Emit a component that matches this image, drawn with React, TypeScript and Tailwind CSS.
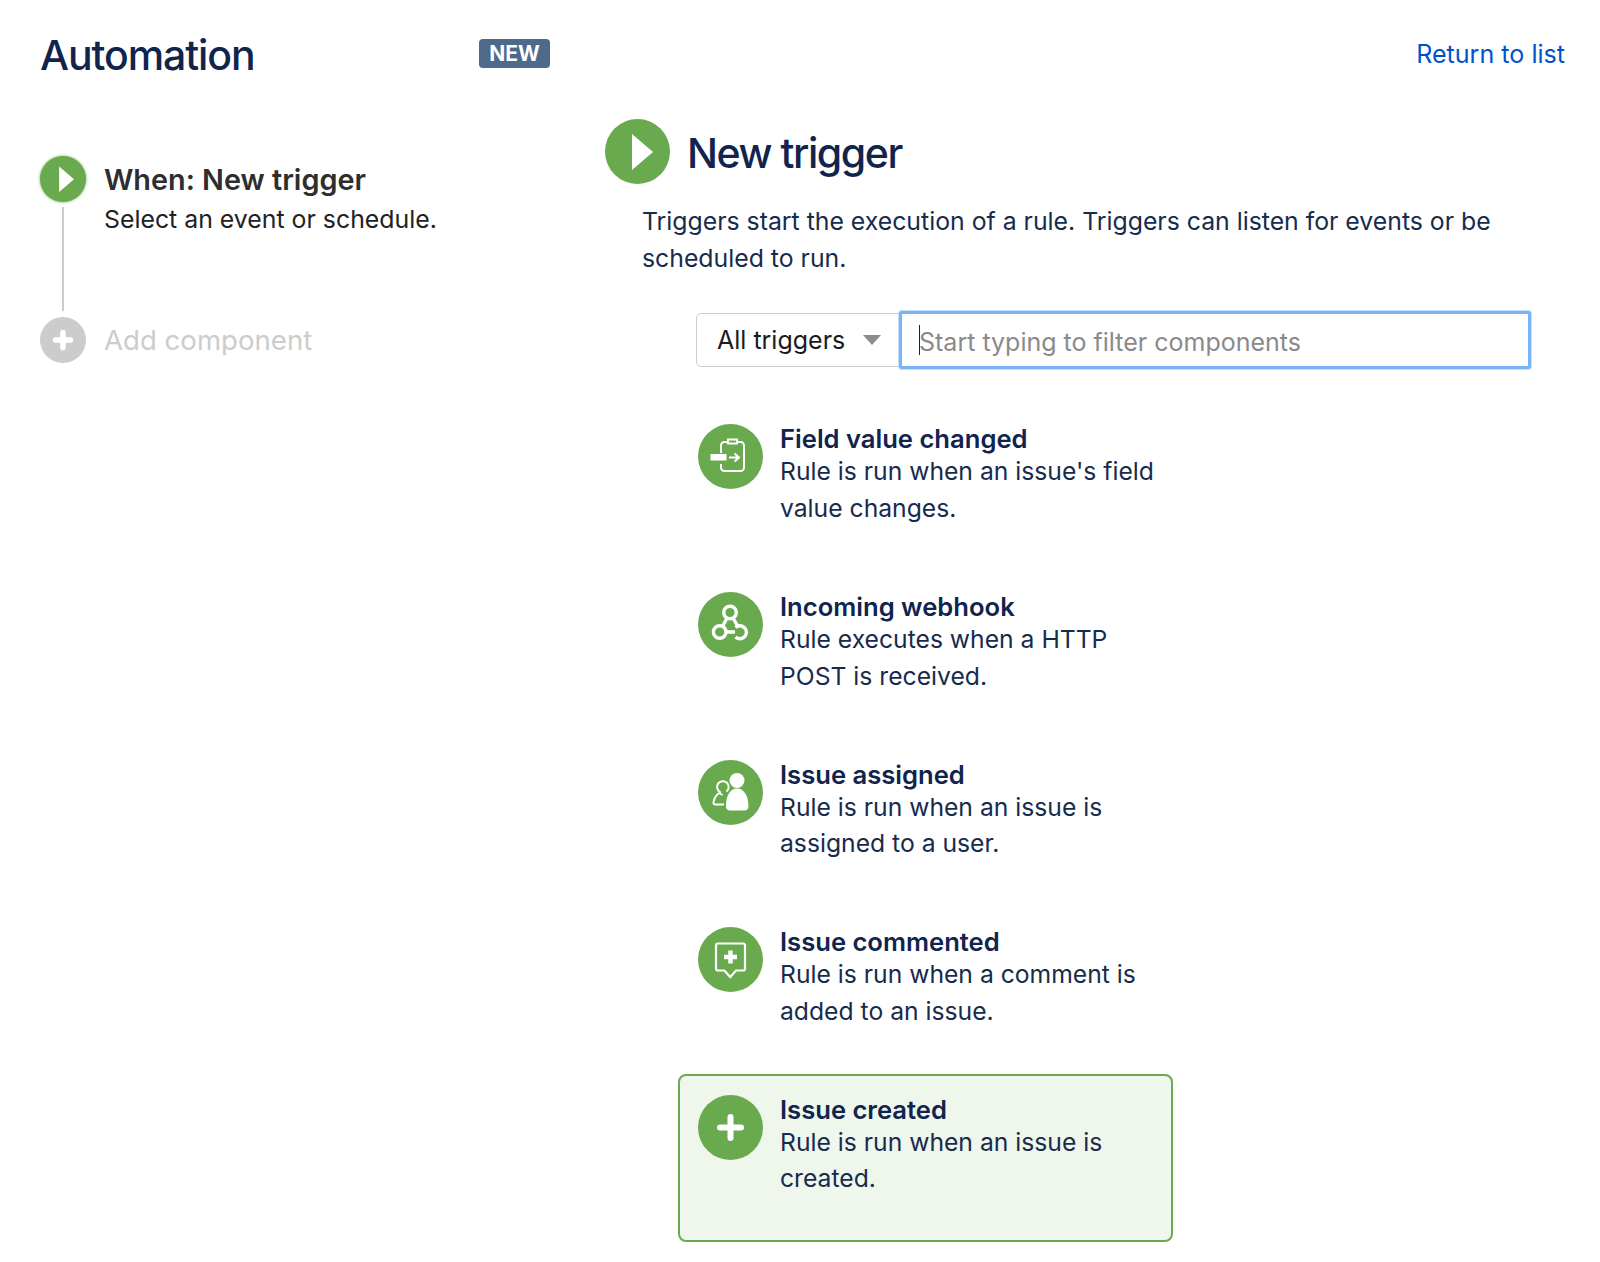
const PlayIcon = () => (
  <svg viewBox="0 0 65 65" className="w-full h-full" fill="none">
    <path d="M27 15V51L48 33Z" fill="white" />
  </svg>
);

const FieldIcon = () => (
  <svg viewBox="0 0 65 65" className="w-full h-full" fill="none">
    <path
      d="M30 18H26.5a3.5 3.5 0 0 0-3.5 3.5V29M23 40v3.5a3.5 3.5 0 0 0 3.5 3.5h16a3.5 3.5 0 0 0 3.5-3.5v-22a3.5 3.5 0 0 0-3.5-3.5H39"
      stroke="white"
      strokeWidth="2"
    />
    <path d="M30 19.5V15.5h9v4z" stroke="white" strokeWidth="2" />
    <rect x="12.5" y="30" width="16" height="6.5" fill="white" />
    <path d="M31 33.5h9M36.5 29.5l4.5 4-4.5 4" stroke="white" strokeWidth="2" />
  </svg>
);

const WebhookIcon = () => (
  <svg viewBox="0 0 65 65" className="w-full h-full" fill="none" stroke="white" strokeWidth="3.400">
    <circle cx="32" cy="20.500" r="6.300" />
    <circle cx="21.700" cy="40" r="6.300" />
    <path d="M37.500 35.500A6.500 6.500 0 1 1 37.500 45" />
    <path d="M29 26L24.500 34.500M35 26L40 34.500M28 40H37" />
  </svg>
);

const AssignedIcon = () => (
  <svg viewBox="0 0 65 65" className="w-full h-full" fill="none">
    <circle cx="39" cy="20.500" r="7.500" fill="white" />
    <path
      d="M39 28.500c7 0 11.500 7.500 11.500 17.500a4 4 0 0 1-4 4.500H32a4 4 0 0 1-4-4.500C28 36 32 28.500 39 28.500Z"
      fill="white"
    />
    <path
      d="M26 44.500H17.500a2 2 0 0 1-2-2.500c.8-4 3.500-7.500 5.500-9M28.500 31.500A5.800 5.800 0 1 0 22 32v1.500l2.500 1.500"
      stroke="white"
      strokeWidth="2"
    />
  </svg>
);

const CommentIcon = () => (
  <svg viewBox="0 0 65 65" className="w-full h-full" fill="none">
    <path
      d="M20 16.500h25a2 2 0 0 1 2 2v23a2 2 0 0 1-2 2h-7l-5.800 6.500-5.800-6.500H20a2 2 0 0 1-2-2v-23a2 2 0 0 1 2-2Z"
      stroke="white"
      strokeWidth="2.200"
    />
    <path d="M32.500 23.500v13M26 30h13" stroke="white" strokeWidth="4.500" />
  </svg>
);

const PlusIcon = ({ size = 6 }: { size?: number }) => (
  <svg viewBox="0 0 65 65" className="w-full h-full" fill="none">
    <path d="M32.500 22v21M22 32.500h21" stroke="white" strokeWidth={size} strokeLinecap="round" />
  </svg>
);

const triggers = [
  {
    title: "Field value changed",
    lines: ["Rule is run when an issue's field", "value changes."],
    icon: <FieldIcon />,
  },
  {
    title: "Incoming webhook",
    lines: ["Rule executes when a HTTP", "POST is received."],
    icon: <WebhookIcon />,
  },
  {
    title: "Issue assigned",
    lines: ["Rule is run when an issue is", "assigned to a user."],
    icon: <AssignedIcon />,
  },
  {
    title: "Issue commented",
    lines: ["Rule is run when a comment is", "added to an issue."],
    icon: <CommentIcon />,
  },
  {
    title: "Issue created",
    lines: ["Rule is run when an issue is", "created."],
    icon: <PlusIcon />,
    selected: true,
  },
];

export default function App() {
  return (
    <div className="w-[1600px] h-[1262px] bg-white flex font-['Inter',sans-serif] text-[#172b4d] overflow-hidden">
      {/* left column: rule steps */}
      <div className="w-[605px] shrink-0 pl-10 pr-[55px] pt-[30px]">
        <div className="flex items-start justify-between h-[126px]">
          <h1 className="text-[41px] leading-[50px] font-medium tracking-[-1.1px] text-[#10244d]">Automation</h1>
          <span className="mt-[9px] w-[71px] h-[29px] rounded-[4px] bg-[#4d6a8b] text-white text-[21px] leading-[29px] font-bold text-center">
            NEW
          </span>
        </div>
        <div className="flex gap-[18px]">
          <div className="w-[46px] flex flex-col items-center">
            <div className="w-[46px] h-[46px] rounded-full bg-[#69aa4f] shadow-[0_0_3px_#69aa4f]">
              <PlayIcon />
            </div>
            <div className="mt-[5px] w-[2px] h-[104px] bg-[#cccccc]" />
          </div>
          <div className="pt-[6px]">
            <div className="text-[28.800px] leading-[36px] font-semibold text-[#2e2e2e]">When: New trigger</div>
            <div className="mt-[3px] text-[24.850px] leading-[36px] text-[#222222]">Select an event or schedule.</div>
          </div>
        </div>
        <div className="flex items-center gap-[18px] mt-[6px]">
          <div className="w-[46px] h-[46px] rounded-full bg-[#cccccc]">
            <PlusIcon size={8} />
          </div>
          <div className="text-[27.600px] leading-[36px] text-[#cccccc]">Add component</div>
        </div>
      </div>

      {/* right column: trigger picker */}
      <div className="flex-1 min-w-0">
        <div className="flex justify-end pr-[35px] pt-[36px] h-[119px]">
          <a className="text-[25.100px] leading-[36px] text-[#0052cc]">Return to list</a>
        </div>
        <div className="flex items-center gap-[17px]">
          <div className="w-[65px] h-[65px] rounded-full bg-[#69aa4f]">
            <PlayIcon />
          </div>
          <h2 className="mt-[2px] text-[41px] leading-[50px] font-medium tracking-[-1.450px] text-[#10244d]">New trigger</h2>
        </div>
        <p className="ml-[37px] mt-[19px] w-[880px] text-[24.800px] leading-[36.700px] text-[#172b4d]">
          Triggers start the execution of a rule. Triggers can listen for events or be scheduled to run.
        </p>
        <div className="ml-[91px] mt-[35px] w-[835px] flex items-center">
          <div className="w-[204px] h-[54px] shrink-0 flex items-center justify-between pl-5 pr-[18px] border border-[#cccccc] rounded-l-[5px] text-[25px] text-[#1b1b1b]">
            All triggers
            <svg width="18" height="10" viewBox="0 0 18 10">
              <path d="M0 0H18L9 10Z" fill="#8c8c8c" />
            </svg>
          </div>
          <div className="relative flex-1 -ml-px h-[58px] border-[3px] border-[#78b3f6] rounded-[3px] shadow-[0_0_0_1px_#c4def9] bg-white">
            <input
              className="w-full h-full pl-[17px] pt-[3px] text-[25px] outline-none placeholder:text-[#8a8a8a]"
              placeholder="Start typing to filter components"
            />
            <span className="absolute left-[17px] top-[11px] w-px h-[30px] bg-[#222222]" />
          </div>
        </div>
        <div className="ml-[73px] mt-[34px] w-[495px] flex flex-col">
          {triggers.map((t) => (
            <div
              key={t.title}
              className={
                t.selected
                  ? "h-[168.600px] flex gap-[17px] pl-[18px] pt-[19px] rounded-[8px] border-2 border-[#69aa4f] bg-[#eff6ec]"
                  : "h-[167.600px] flex gap-[17px] pl-[20px] pt-[21px]"
              }
            >
              <div className="w-[65px] h-[65px] shrink-0 rounded-full bg-[#69aa4f]">{t.icon}</div>
              <div className="mt-px">
                <div className="text-[25.600px] leading-[28px] font-semibold text-[#10244d]">{t.title}</div>
                {t.lines.map((l) => (
                  <div key={l} className="text-[24.700px] leading-[36.700px] text-[#172b4d]">
                    {l}
                  </div>
                ))}
              </div>
            </div>
          ))}
        </div>
      </div>
    </div>
  );
}
